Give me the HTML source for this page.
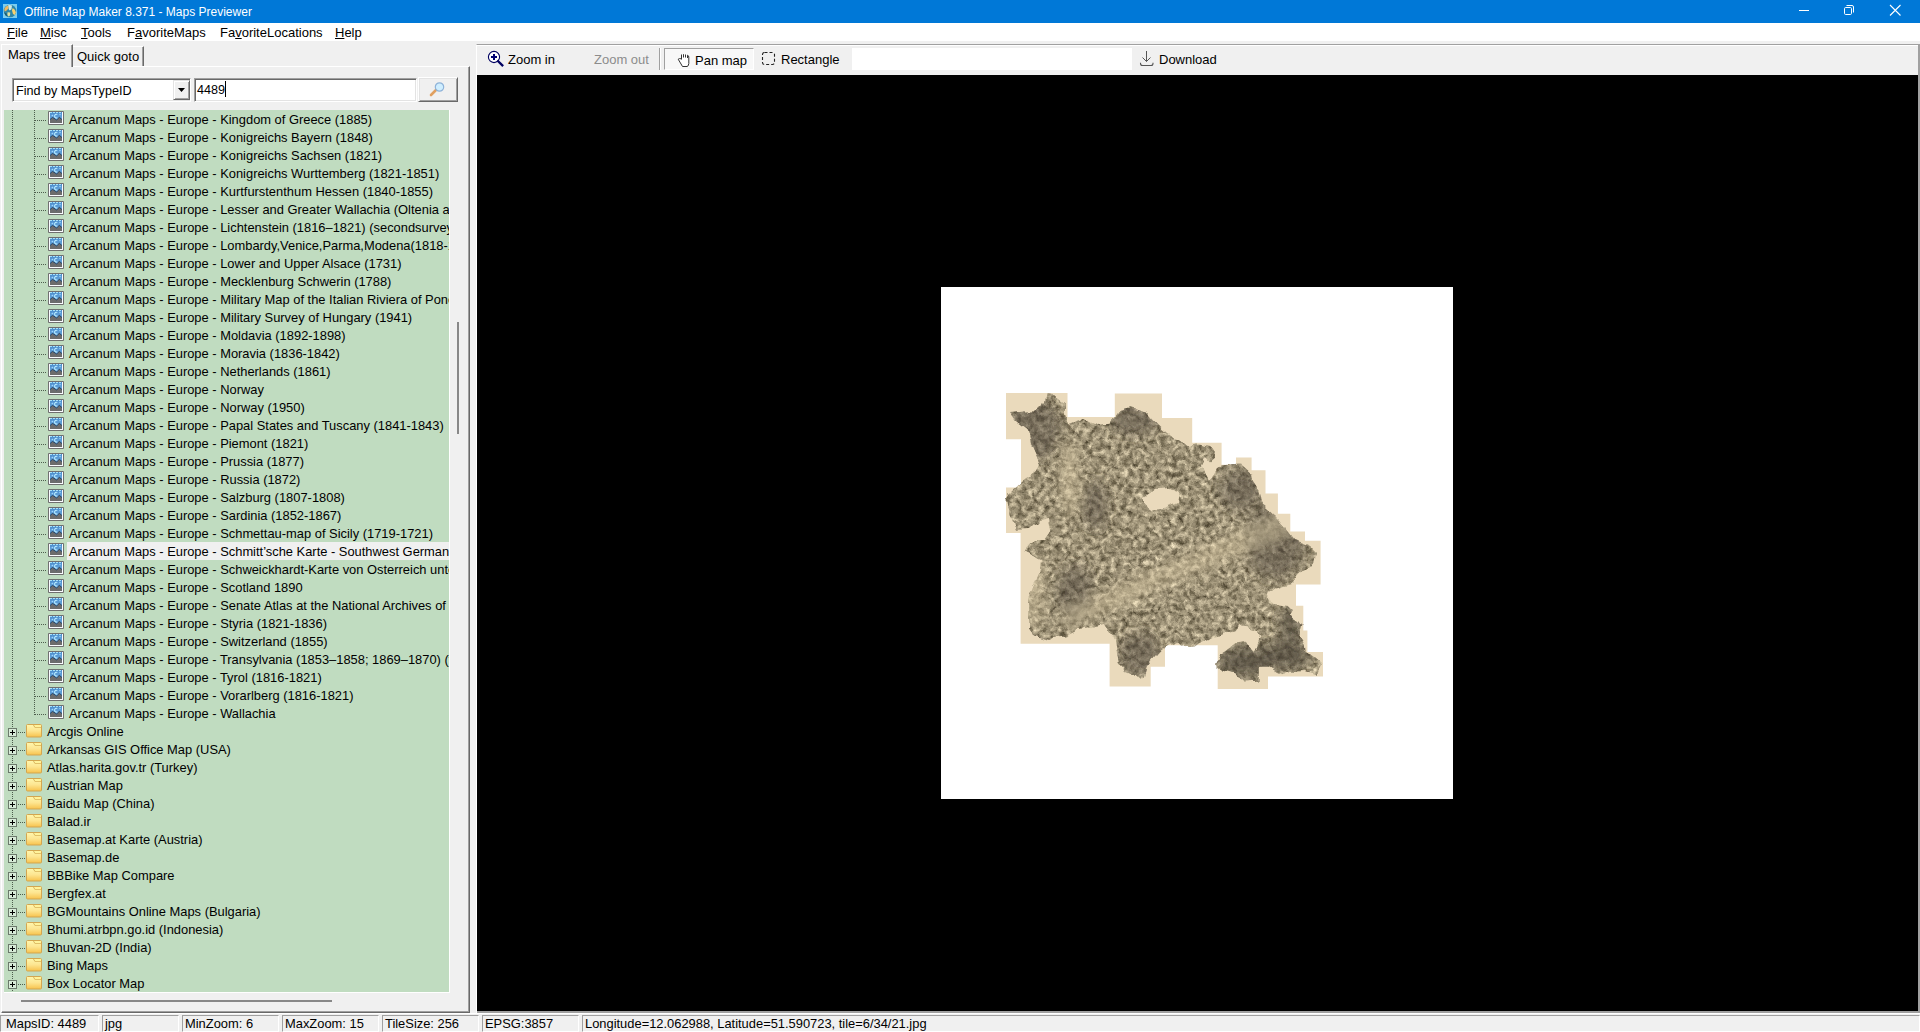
<!DOCTYPE html>
<html><head><meta charset="utf-8"><title>Offline Map Maker</title>
<style>
*{box-sizing:border-box}
html,body{margin:0;padding:0}
body{width:1920px;height:1032px;overflow:hidden;position:relative;background:#f0f0f0;font-family:"Liberation Sans",sans-serif;font-size:13px;color:#000}
.a{position:absolute}
#title{left:0;top:0;width:1920px;height:23px;background:#0078d7;color:#fff}
#title .t{position:absolute;left:24px;top:5px;font-size:12px;line-height:14px;white-space:nowrap}
#menu{left:0;top:23px;width:1920px;height:18px;background:#fff}
.mi{position:absolute;top:2px;line-height:15px;white-space:nowrap}
u{text-decoration:underline;text-decoration-thickness:1px;text-underline-offset:1px}
#tree{left:4px;top:110px;width:445px;height:882px;background:#c0dcc0;overflow:hidden}
#tree .row{position:absolute;height:18px;line-height:18px;padding-top:1px;padding-left:2px;padding-right:4px;white-space:nowrap;font-size:12.9px}
#tree .sel{background:#f0f0f0}
.hd{position:absolute;height:1px;background-image:linear-gradient(90deg,#4d5d4d 50%,transparent 50%);background-size:2px 1px}
.vd{position:absolute;width:1px;background-image:linear-gradient(180deg,#4d5d4d 50%,transparent 50%);background-size:1px 2px}
.ai{position:absolute;left:44px;width:16px;height:16px}
.fo{position:absolute;left:22px;width:16px;height:14px}
.eb{position:absolute;left:4px;width:9px;height:9px;border:1px solid #6c7a6c;background:#d8ecd8}
.eb:before{content:"";position:absolute;left:1px;top:3px;width:5px;height:1px;background:#000}
.eb:after{content:"";position:absolute;left:3px;top:1px;width:1px;height:5px;background:#000}
.sunk{position:absolute;background:#fff;border-top:1px solid #a0a0a0;border-left:1px solid #a0a0a0;border-right:1px solid #fff;border-bottom:1px solid #fff;box-shadow:inset 1px 1px 0 #696969, inset -1px -1px 0 #e3e3e3}
.rais{position:absolute;background:#f0f0f0;border-top:1px solid #fff;border-left:1px solid #fff;border-right:1px solid #696969;border-bottom:1px solid #696969;box-shadow:inset 1px 1px 0 #e3e3e3, inset -1px -1px 0 #a0a0a0}
.st{position:absolute;top:1015px;height:17px;border-top:1px solid #a0a0a0;border-left:1px solid #a0a0a0;border-right:1px solid #fff;border-bottom:1px solid #fff;line-height:15px;padding-left:5px;white-space:nowrap;font-size:12.9px}
</style></head><body>
<svg width="0" height="0" style="position:absolute">
<defs>
<symbol id="imgi" viewBox="0 0 16 16"><defs><linearGradient id="sky" x1="0" y1="0" x2="0" y2="1"><stop offset="0" stop-color="#4a8ccc"/><stop offset="1" stop-color="#78b6e6"/></linearGradient></defs><rect x="0" y="0" width="16" height="14" rx="1" fill="#707070"/><rect x="1" y="1" width="14" height="12" fill="#fafcff"/><rect x="2" y="1" width="12" height="11" fill="url(#sky)"/><path d="M2 1.5 h2 M5 1.5 h2 M8 1.5 h2 M11 1.5 h2" stroke="#a8e2f8" stroke-width="1"/><path d="M2 8.5 L4.5 6.4 L8.7 8.9 L11.3 6.3 L14 8.5 L14 12 L2 12Z" fill="#6c6c6c"/><path d="M2 8.5 L4.5 6.4 L8.7 8.9 L11.3 6.3 L14 8.5" fill="none" stroke="#1d3d60" stroke-width="0.9"/><path d="M9.3 3.4 A1.9 1.9 0 1 0 9.3 6.8" fill="none" stroke="#b8ecff" stroke-width="1.1"/><path d="M4.4 3.4 L5.4 4.4 L4.4 5.4 L3.4 4.4Z" fill="#9fd8ff"/><path d="M12 2.6 L12.9 3.5 L12 4.4 L11.1 3.5Z" fill="#9fd8ff"/></symbol>
<symbol id="fold" viewBox="0 0 16 14"><defs><linearGradient id="fg" x1="0" y1="0" x2="0" y2="1"><stop offset="0" stop-color="#fff7ae"/><stop offset="0.5" stop-color="#fde590"/><stop offset="1" stop-color="#f7c24c"/></linearGradient></defs><path d="M1.5 0.5 H14.5 a1 1 0 0 1 1 1 V12 a1 1 0 0 1 -1 1 H1.5 a1 1 0 0 1 -1 -1 V1.5 a1 1 0 0 1 1 -1Z" fill="url(#fg)" stroke="#d3a650"/><path d="M7.5 1 L8.8 3.3 H15" fill="none" stroke="#d9b45a" stroke-width="1"/><rect x="9" y="1" width="6" height="2" fill="#fff39a"/></symbol>
</defs></svg>

<div id="title" class="a">
 <svg class="a" style="left:3px;top:4px" width="14" height="14" viewBox="0 0 14 14"><rect width="14" height="14" fill="#7ccdf0"/><circle cx="7" cy="7" r="6.3" fill="#2f86a8"/><path d="M5 1.2 Q7 0.6 9 1.4 L8.6 5 Q7 7 6 6 Z" fill="#cfe9e6"/><path d="M1.3 5 Q2.2 2.4 4.8 1.6 L5.6 4.2 L3.6 6.6 L1.6 7.4Z" fill="#f0b860"/><path d="M9.4 4.2 Q12.4 5 12.8 8.4 L11.8 11 L10 10 L9 6.4Z" fill="#f6d070"/><path d="M4.6 8.2 L7.2 8.6 L7 11.6 L5.4 12.4 L4.4 10.6Z" fill="#e2e0a0"/><path d="M1.2 8.5 Q2 11.6 4.2 12.6 L3.6 9.6Z" fill="#1d5a6a"/></svg>
 <div class="t">Offline Map Maker 8.371 - Maps Previewer</div>
 <svg class="a" style="left:1799px;top:10px" width="12" height="2"><rect width="10" height="1" fill="#fff"/></svg>
 <svg class="a" style="left:1843px;top:4px" width="12" height="12" viewBox="0 0 12 12"><rect x="1.5" y="3.5" width="7" height="7" rx="1.2" fill="none" stroke="#fff"/><path d="M3.5 1.5 H9 a1.5 1.5 0 0 1 1.5 1.5 V8.5" fill="none" stroke="#fff"/></svg>
 <svg class="a" style="left:1889px;top:4px" width="13" height="13" viewBox="0 0 13 13"><path d="M1 1 L11.5 11.5 M11.5 1 L1 11.5" stroke="#fff" stroke-width="1.1"/></svg>
</div>

<div id="menu" class="a">
 <div class="mi" style="left:7px"><u>F</u>ile</div>
 <div class="mi" style="left:40px"><u>M</u>isc</div>
 <div class="mi" style="left:81px"><u>T</u>ools</div>
 <div class="mi" style="left:127px">F<u>a</u>voriteMaps</div>
 <div class="mi" style="left:220px">Fa<u>v</u>oriteLocations</div>
 <div class="mi" style="left:335px"><u>H</u>elp</div>
</div>

<!-- left panel -->
<div class="a" style="left:1px;top:66px;width:469px;height:947px;border-top:1px solid #fff;border-left:1px solid #fff;border-right:1px solid #696969;border-bottom:1px solid #696969;box-shadow:inset -1px -1px 0 #a0a0a0"></div>
<div class="a" style="left:1px;top:44px;width:72px;height:23px;background:#f0f0f0;border-top:1px solid #fff;border-left:1px solid #fff;border-right:1px solid #696969;box-shadow:inset -1px 0 0 #a0a0a0"></div>
<div class="a" style="left:8px;top:47px;line-height:16px">Maps tree</div>
<div class="a" style="left:73px;top:46px;width:71px;height:20px;border-top:1px solid #fff;border-right:1px solid #696969;box-shadow:inset -1px 0 0 #a0a0a0"></div>
<div class="a" style="left:77px;top:49px;line-height:16px">Quick goto</div>

<div class="sunk" style="left:12px;top:78px;width:179px;height:24px"></div>
<div class="a" style="left:16px;top:83px;line-height:16px;font-size:12.6px">Find by MapsTypeID</div>
<div class="rais" style="left:173px;top:80px;width:17px;height:20px;border-top-color:#e3e3e3;border-left-color:#e3e3e3;box-shadow:inset 1px 1px 0 #fff, inset -1px -1px 0 #a0a0a0"></div>
<svg class="a" style="left:178px;top:88px" width="7" height="4"><path d="M0 0 H7 L3.5 4Z" fill="#000"/></svg>
<div class="sunk" style="left:194px;top:78px;width:223px;height:24px"></div>
<div class="a" style="left:197px;top:82px;line-height:16px;font-size:12.6px">4489</div>
<div class="a" style="left:225px;top:81px;width:1px;height:16px;background:#000"></div>
<div class="rais" style="left:418px;top:77px;width:40px;height:25px"></div>
<svg class="a" style="left:429px;top:81px" width="18" height="16" viewBox="0 0 18 16"><path d="M2 14 L7 9" stroke="#e0a060" stroke-width="2.6" stroke-linecap="round"/><circle cx="10.5" cy="6" r="4.2" fill="#cfeeff" stroke="#8fb3d9" stroke-width="1.2"/></svg>

<div class="a" style="left:4px;top:110px;width:446px;height:883px;background:#fff"></div>
<div id="tree" class="a">
 <div class="vd" style="left:8px;top:0;height:882px"></div>
 <div class="vd" style="left:30px;top:0;height:605px"></div>
 <div class="hd" style="top:10px;left:31px;width:12px"></div><div class="ai" style="top:1px"><svg width="16" height="16"><use href="#imgi"/></svg></div><div class="row" style="top:0px;left:63px">Arcanum Maps - Europe - Kingdom of Greece (1885)</div>
<div class="hd" style="top:28px;left:31px;width:12px"></div><div class="ai" style="top:19px"><svg width="16" height="16"><use href="#imgi"/></svg></div><div class="row" style="top:18px;left:63px">Arcanum Maps - Europe - Konigreichs Bayern (1848)</div>
<div class="hd" style="top:46px;left:31px;width:12px"></div><div class="ai" style="top:37px"><svg width="16" height="16"><use href="#imgi"/></svg></div><div class="row" style="top:36px;left:63px">Arcanum Maps - Europe - Konigreichs Sachsen (1821)</div>
<div class="hd" style="top:64px;left:31px;width:12px"></div><div class="ai" style="top:55px"><svg width="16" height="16"><use href="#imgi"/></svg></div><div class="row" style="top:54px;left:63px">Arcanum Maps - Europe - Konigreichs Wurttemberg (1821-1851)</div>
<div class="hd" style="top:82px;left:31px;width:12px"></div><div class="ai" style="top:73px"><svg width="16" height="16"><use href="#imgi"/></svg></div><div class="row" style="top:72px;left:63px">Arcanum Maps - Europe - Kurtfurstenthum Hessen (1840-1855)</div>
<div class="hd" style="top:100px;left:31px;width:12px"></div><div class="ai" style="top:91px"><svg width="16" height="16"><use href="#imgi"/></svg></div><div class="row" style="top:90px;left:63px">Arcanum Maps - Europe - Lesser and Greater Wallachia (Oltenia and Muntenia)</div>
<div class="hd" style="top:118px;left:31px;width:12px"></div><div class="ai" style="top:109px"><svg width="16" height="16"><use href="#imgi"/></svg></div><div class="row" style="top:108px;left:63px">Arcanum Maps - Europe - Lichtenstein (1816–1821) (secondsurvey)</div>
<div class="hd" style="top:136px;left:31px;width:12px"></div><div class="ai" style="top:127px"><svg width="16" height="16"><use href="#imgi"/></svg></div><div class="row" style="top:126px;left:63px">Arcanum Maps - Europe - Lombardy,Venice,Parma,Modena(1818-1829)</div>
<div class="hd" style="top:154px;left:31px;width:12px"></div><div class="ai" style="top:145px"><svg width="16" height="16"><use href="#imgi"/></svg></div><div class="row" style="top:144px;left:63px">Arcanum Maps - Europe - Lower and Upper Alsace (1731)</div>
<div class="hd" style="top:172px;left:31px;width:12px"></div><div class="ai" style="top:163px"><svg width="16" height="16"><use href="#imgi"/></svg></div><div class="row" style="top:162px;left:63px">Arcanum Maps - Europe - Mecklenburg Schwerin (1788)</div>
<div class="hd" style="top:190px;left:31px;width:12px"></div><div class="ai" style="top:181px"><svg width="16" height="16"><use href="#imgi"/></svg></div><div class="row" style="top:180px;left:63px">Arcanum Maps - Europe - Military Map of the Italian Riviera of Ponente</div>
<div class="hd" style="top:208px;left:31px;width:12px"></div><div class="ai" style="top:199px"><svg width="16" height="16"><use href="#imgi"/></svg></div><div class="row" style="top:198px;left:63px">Arcanum Maps - Europe - Military Survey of Hungary (1941)</div>
<div class="hd" style="top:226px;left:31px;width:12px"></div><div class="ai" style="top:217px"><svg width="16" height="16"><use href="#imgi"/></svg></div><div class="row" style="top:216px;left:63px">Arcanum Maps - Europe - Moldavia (1892-1898)</div>
<div class="hd" style="top:244px;left:31px;width:12px"></div><div class="ai" style="top:235px"><svg width="16" height="16"><use href="#imgi"/></svg></div><div class="row" style="top:234px;left:63px">Arcanum Maps - Europe - Moravia (1836-1842)</div>
<div class="hd" style="top:262px;left:31px;width:12px"></div><div class="ai" style="top:253px"><svg width="16" height="16"><use href="#imgi"/></svg></div><div class="row" style="top:252px;left:63px">Arcanum Maps - Europe - Netherlands (1861)</div>
<div class="hd" style="top:280px;left:31px;width:12px"></div><div class="ai" style="top:271px"><svg width="16" height="16"><use href="#imgi"/></svg></div><div class="row" style="top:270px;left:63px">Arcanum Maps - Europe - Norway</div>
<div class="hd" style="top:298px;left:31px;width:12px"></div><div class="ai" style="top:289px"><svg width="16" height="16"><use href="#imgi"/></svg></div><div class="row" style="top:288px;left:63px">Arcanum Maps - Europe - Norway (1950)</div>
<div class="hd" style="top:316px;left:31px;width:12px"></div><div class="ai" style="top:307px"><svg width="16" height="16"><use href="#imgi"/></svg></div><div class="row" style="top:306px;left:63px">Arcanum Maps - Europe - Papal States and Tuscany (1841-1843)</div>
<div class="hd" style="top:334px;left:31px;width:12px"></div><div class="ai" style="top:325px"><svg width="16" height="16"><use href="#imgi"/></svg></div><div class="row" style="top:324px;left:63px">Arcanum Maps - Europe - Piemont (1821)</div>
<div class="hd" style="top:352px;left:31px;width:12px"></div><div class="ai" style="top:343px"><svg width="16" height="16"><use href="#imgi"/></svg></div><div class="row" style="top:342px;left:63px">Arcanum Maps - Europe - Prussia (1877)</div>
<div class="hd" style="top:370px;left:31px;width:12px"></div><div class="ai" style="top:361px"><svg width="16" height="16"><use href="#imgi"/></svg></div><div class="row" style="top:360px;left:63px">Arcanum Maps - Europe - Russia (1872)</div>
<div class="hd" style="top:388px;left:31px;width:12px"></div><div class="ai" style="top:379px"><svg width="16" height="16"><use href="#imgi"/></svg></div><div class="row" style="top:378px;left:63px">Arcanum Maps - Europe - Salzburg (1807-1808)</div>
<div class="hd" style="top:406px;left:31px;width:12px"></div><div class="ai" style="top:397px"><svg width="16" height="16"><use href="#imgi"/></svg></div><div class="row" style="top:396px;left:63px">Arcanum Maps - Europe - Sardinia (1852-1867)</div>
<div class="hd" style="top:424px;left:31px;width:12px"></div><div class="ai" style="top:415px"><svg width="16" height="16"><use href="#imgi"/></svg></div><div class="row" style="top:414px;left:63px">Arcanum Maps - Europe - Schmettau-map of Sicily (1719-1721)</div>
<div class="hd" style="top:442px;left:31px;width:12px"></div><div class="ai" style="top:433px"><svg width="16" height="16"><use href="#imgi"/></svg></div><div class="row sel" style="top:432px;left:63px">Arcanum Maps - Europe - Schmitt’sche Karte - Southwest Germany (1797)</div>
<div class="hd" style="top:460px;left:31px;width:12px"></div><div class="ai" style="top:451px"><svg width="16" height="16"><use href="#imgi"/></svg></div><div class="row" style="top:450px;left:63px">Arcanum Maps - Europe - Schweickhardt-Karte von Osterreich unter der Enns</div>
<div class="hd" style="top:478px;left:31px;width:12px"></div><div class="ai" style="top:469px"><svg width="16" height="16"><use href="#imgi"/></svg></div><div class="row" style="top:468px;left:63px">Arcanum Maps - Europe - Scotland 1890</div>
<div class="hd" style="top:496px;left:31px;width:12px"></div><div class="ai" style="top:487px"><svg width="16" height="16"><use href="#imgi"/></svg></div><div class="row" style="top:486px;left:63px">Arcanum Maps - Europe - Senate Atlas at the National Archives of Finland</div>
<div class="hd" style="top:514px;left:31px;width:12px"></div><div class="ai" style="top:505px"><svg width="16" height="16"><use href="#imgi"/></svg></div><div class="row" style="top:504px;left:63px">Arcanum Maps - Europe - Styria (1821-1836)</div>
<div class="hd" style="top:532px;left:31px;width:12px"></div><div class="ai" style="top:523px"><svg width="16" height="16"><use href="#imgi"/></svg></div><div class="row" style="top:522px;left:63px">Arcanum Maps - Europe - Switzerland (1855)</div>
<div class="hd" style="top:550px;left:31px;width:12px"></div><div class="ai" style="top:541px"><svg width="16" height="16"><use href="#imgi"/></svg></div><div class="row" style="top:540px;left:63px">Arcanum Maps - Europe - Transylvania (1853–1858; 1869–1870) (third survey)</div>
<div class="hd" style="top:568px;left:31px;width:12px"></div><div class="ai" style="top:559px"><svg width="16" height="16"><use href="#imgi"/></svg></div><div class="row" style="top:558px;left:63px">Arcanum Maps - Europe - Tyrol (1816-1821)</div>
<div class="hd" style="top:586px;left:31px;width:12px"></div><div class="ai" style="top:577px"><svg width="16" height="16"><use href="#imgi"/></svg></div><div class="row" style="top:576px;left:63px">Arcanum Maps - Europe - Vorarlberg (1816-1821)</div>
<div class="hd" style="top:604px;left:31px;width:12px"></div><div class="ai" style="top:595px"><svg width="16" height="16"><use href="#imgi"/></svg></div><div class="row" style="top:594px;left:63px">Arcanum Maps - Europe - Wallachia</div>
<div class="hd" style="top:622px;left:14px;width:8px"></div><div class="eb" style="top:618px"></div><div class="fo" style="top:614px"><svg width="16" height="14"><use href="#fold"/></svg></div><div class="row" style="top:612px;left:41px">Arcgis Online</div>
<div class="hd" style="top:640px;left:14px;width:8px"></div><div class="eb" style="top:636px"></div><div class="fo" style="top:632px"><svg width="16" height="14"><use href="#fold"/></svg></div><div class="row" style="top:630px;left:41px">Arkansas GIS Office Map (USA)</div>
<div class="hd" style="top:658px;left:14px;width:8px"></div><div class="eb" style="top:654px"></div><div class="fo" style="top:650px"><svg width="16" height="14"><use href="#fold"/></svg></div><div class="row" style="top:648px;left:41px">Atlas.harita.gov.tr (Turkey)</div>
<div class="hd" style="top:676px;left:14px;width:8px"></div><div class="eb" style="top:672px"></div><div class="fo" style="top:668px"><svg width="16" height="14"><use href="#fold"/></svg></div><div class="row" style="top:666px;left:41px">Austrian Map</div>
<div class="hd" style="top:694px;left:14px;width:8px"></div><div class="eb" style="top:690px"></div><div class="fo" style="top:686px"><svg width="16" height="14"><use href="#fold"/></svg></div><div class="row" style="top:684px;left:41px">Baidu Map (China)</div>
<div class="hd" style="top:712px;left:14px;width:8px"></div><div class="eb" style="top:708px"></div><div class="fo" style="top:704px"><svg width="16" height="14"><use href="#fold"/></svg></div><div class="row" style="top:702px;left:41px">Balad.ir</div>
<div class="hd" style="top:730px;left:14px;width:8px"></div><div class="eb" style="top:726px"></div><div class="fo" style="top:722px"><svg width="16" height="14"><use href="#fold"/></svg></div><div class="row" style="top:720px;left:41px">Basemap.at Karte (Austria)</div>
<div class="hd" style="top:748px;left:14px;width:8px"></div><div class="eb" style="top:744px"></div><div class="fo" style="top:740px"><svg width="16" height="14"><use href="#fold"/></svg></div><div class="row" style="top:738px;left:41px">Basemap.de</div>
<div class="hd" style="top:766px;left:14px;width:8px"></div><div class="eb" style="top:762px"></div><div class="fo" style="top:758px"><svg width="16" height="14"><use href="#fold"/></svg></div><div class="row" style="top:756px;left:41px">BBBike Map Compare</div>
<div class="hd" style="top:784px;left:14px;width:8px"></div><div class="eb" style="top:780px"></div><div class="fo" style="top:776px"><svg width="16" height="14"><use href="#fold"/></svg></div><div class="row" style="top:774px;left:41px">Bergfex.at</div>
<div class="hd" style="top:802px;left:14px;width:8px"></div><div class="eb" style="top:798px"></div><div class="fo" style="top:794px"><svg width="16" height="14"><use href="#fold"/></svg></div><div class="row" style="top:792px;left:41px">BGMountains Online Maps (Bulgaria)</div>
<div class="hd" style="top:820px;left:14px;width:8px"></div><div class="eb" style="top:816px"></div><div class="fo" style="top:812px"><svg width="16" height="14"><use href="#fold"/></svg></div><div class="row" style="top:810px;left:41px">Bhumi.atrbpn.go.id (Indonesia)</div>
<div class="hd" style="top:838px;left:14px;width:8px"></div><div class="eb" style="top:834px"></div><div class="fo" style="top:830px"><svg width="16" height="14"><use href="#fold"/></svg></div><div class="row" style="top:828px;left:41px">Bhuvan-2D (India)</div>
<div class="hd" style="top:856px;left:14px;width:8px"></div><div class="eb" style="top:852px"></div><div class="fo" style="top:848px"><svg width="16" height="14"><use href="#fold"/></svg></div><div class="row" style="top:846px;left:41px">Bing Maps</div>
<div class="hd" style="top:874px;left:14px;width:8px"></div><div class="eb" style="top:870px"></div><div class="fo" style="top:866px"><svg width="16" height="14"><use href="#fold"/></svg></div><div class="row" style="top:864px;left:41px">Box Locator Map</div>
</div>
<div class="a" style="left:457px;top:322px;width:2px;height:112px;background:#888"></div>
<div class="a" style="left:21px;top:1000px;width:311px;height:2px;background:#888"></div>

<!-- right side -->
<div class="a" style="left:476px;top:44px;width:1444px;height:969px;border-top:1px solid #a0a0a0;border-left:1px solid #fff;box-shadow:inset 0 1px 0 #fff"></div>
<div class="a" style="left:477px;top:75px;width:1441px;height:936px;background:#000"></div>
<div class="a" style="left:477px;top:1011px;width:1443px;height:2px;background:#a0a0a0"></div>
<div class="a" style="left:1918px;top:45px;width:2px;height:968px;background:#a0a0a0"></div>

<!-- toolbar -->
<svg class="a" style="left:487px;top:50px" width="17" height="17" viewBox="0 0 17 17"><circle cx="7" cy="7" r="5.6" fill="#fff" stroke="#000060" stroke-width="1.1"/><path d="M4 6 H10 V8 H4Z M6 4 H8 V10 H6Z" fill="#000070"/><path d="M11.2 11.2 L15.3 15.3" stroke="#000060" stroke-width="2.3" stroke-linecap="square"/></svg>
<div class="a" style="left:508px;top:52px;line-height:16px">Zoom in</div>
<div class="a" style="left:594px;top:52px;line-height:16px;color:#8c8c8c">Zoom out</div>
<div class="a" style="left:659px;top:48px;width:1px;height:22px;background:#a0a0a0"></div>
<div class="a" style="left:660px;top:48px;width:1px;height:22px;background:#fff"></div>
<div class="a" style="left:664px;top:48px;width:90px;height:22px;background:#f8f8f8;border-top:1px solid #a0a0a0;border-left:1px solid #a0a0a0;border-right:1px solid #fff;border-bottom:1px solid #fff"></div>
<svg class="a" style="left:677px;top:53px" width="14" height="15" viewBox="0 0 14 15"><path d="M4.4 5.8 V1.5 H11.8 V10.5 Q11.5 13.5 10 13.5 H5.5 L1.2 6.2 Q1.8 5.2 4.4 5.8Z" fill="#fff"/><path d="M4.5 6.5 V1.5 M6.5 4.5 V1.2 M8.5 4.5 V1.5 M10.5 5 V2.2 Q11.8 2.6 11.8 4 V10.5 Q11.5 13.5 10 13.5 H5.5 L1.2 6.2 Q1.8 5.2 4.4 5.8" fill="none" stroke="#333" stroke-width="1"/></svg>
<div class="a" style="left:695px;top:53px;line-height:16px">Pan map</div>
<svg class="a" style="left:761px;top:51px" width="16" height="16" viewBox="0 0 16 16"><rect x="1.5" y="1.5" width="12" height="12" rx="2" fill="none" stroke="#222" stroke-width="1.1" stroke-dasharray="3 2"/></svg>
<div class="a" style="left:781px;top:52px;line-height:16px">Rectangle</div>
<div class="a" style="left:852px;top:48px;width:280px;height:22px;background:#fff"></div>
<svg class="a" style="left:1139px;top:50px" width="16" height="17" viewBox="0 0 16 17"><path d="M7.5 1 V11.5 M3.5 7.5 L7.5 11.5 L11.5 7.5" fill="none" stroke="#555" stroke-width="1"/><path d="M1.5 12.8 V13.5 a2 2 0 0 0 2 2 H12 a2 2 0 0 0 2 -2 V12.8" fill="none" stroke="#555" stroke-width="1.1"/></svg>
<div class="a" style="left:1159px;top:52px;line-height:16px">Download</div>

<!-- map -->
<div class="a" style="left:941px;top:287px;width:512px;height:512px;background:#fff"></div>
<svg class="a" style="left:941px;top:287px" width="512" height="512" viewBox="941 287 512 512">
<defs>
<clipPath id="bc"><path d="M1010 413 L1024.8 411.4 L1035.7 411.4 L1045 402 L1046.5 394.3 L1054 395 L1065 403.6 L1065 413 L1068 424 L1082 419 L1096 425 L1108.6 423.8 L1118 411.4 L1131.8 408.3 L1147 413 L1157 423.8 L1170 436 L1181 440.8 L1188.8 447 L1196.5 444 L1210.5 447 L1216.7 458 L1212 462.5 L1205.8 456 L1201 465.6 L1209 481 L1218 471.8 L1221.3 465.6 L1240 463.3 L1252 474 L1253 482 L1258.5 490.4 L1262.4 506 L1275.6 517.6 L1285.7 529 L1294 540 L1308 545 L1315 553 L1313 566 L1303 569.5 L1296.7 576 L1292 584 L1275 589 L1270.5 592 L1268 598.5 L1273.7 603.9 L1288.6 606 L1292.9 610 L1289.7 615.6 L1298 621 L1301.4 626 L1299.3 635.8 L1304.6 644.4 L1305.6 650.8 L1314 657 L1321.6 663.6 L1316.3 674.2 L1306.7 671 L1288.6 672 L1280 674.2 L1267.3 666.8 L1258.7 666.8 L1258.7 679.6 L1242.8 680.6 L1236.4 674.2 L1224.6 671 L1216 664.6 L1220.4 654 L1226.8 649.7 L1235.3 643.3 L1243.8 642.2 L1249 646.5 L1253.4 651.8 L1257.7 647.6 L1261 637 L1257.7 630.5 L1248 627.3 L1239.6 626.2 L1235.3 631.6 L1224.6 633.7 L1214 637 L1199 643.3 L1194.8 646.5 L1182 647.6 L1176.7 642.2 L1169 645.4 L1160.7 649.7 L1152 659.3 L1146.6 666.7 L1143 680 L1136.7 675 L1125 670 L1118.6 662 L1115 642 L1105 624 L1092 627 L1077.4 629 L1066 635.4 L1052.7 637 L1049 640 L1033 635 L1028 629 L1028 599 L1033 588 L1039.5 571 L1041 560 L1023 551 L1033 540 L1045 540 L1052 530 L1050 518 L1040 520 L1030 530 L1017 530.8 L1009.3 513.7 L1005.4 499.8 L1009.3 493.6 L1023 481 L1035.7 472 L1040 464 L1031 444 L1028 430 L1015.5 420.7Z"/></clipPath>
<filter id="nz" x="941" y="287" width="512" height="512" filterUnits="userSpaceOnUse" color-interpolation-filters="sRGB"><feTurbulence type="fractalNoise" baseFrequency="0.18" numOctaves="4" seed="7"/><feColorMatrix values="0.85 0 0 0 0.19  0.82 0 0 0 0.16  0.75 0 0 0 0.09  0 0 0 0 1"/></filter>
<filter id="dm" x="941" y="287" width="512" height="512" filterUnits="userSpaceOnUse"><feTurbulence type="fractalNoise" baseFrequency="0.09" numOctaves="2" seed="3" result="t"/><feDisplacementMap in="SourceGraphic" in2="t" scale="7" xChannelSelector="R" yChannelSelector="G"/></filter>
<filter id="bl" x="-50%" y="-50%" width="200%" height="200%"><feGaussianBlur stdDeviation="6"/></filter>
</defs>
<rect x="941" y="287" width="512" height="512" fill="#fff"/>
<path d="M1006 393 L1067.5 393 L1067.5 417 L1114.8 417 L1114.8 393.5 L1162 393.5 L1162 418 L1192.2 418 L1192.2 442.7 L1221.6 442.7 L1221.6 464.8 L1236 464.8 L1236 457.6 L1251.6 457.6 L1251.6 470.3 L1265.5 470.3 L1265.5 493.5 L1277.9 493.5 L1277.9 513.7 L1290.3 513.7 L1290.3 531.5 L1305 531.5 L1305 540.7 L1320.6 540.7 L1320.6 584.4 L1296 584.4 L1296 605.8 L1303.3 605.8 L1303.3 630.5 L1307.4 630.5 L1307.4 652 L1323 652 L1323 676.6 L1268 676.6 L1268 689 L1217.7 689 L1217.7 645.3 L1165 645.3 L1165 666.7 L1150.7 666.7 L1150.7 686.5 L1109.6 686.5 L1109.6 643.7 L1020.6 643.7 L1020.6 533 L1006 533 L1006 487.4 L1021 487.4 L1021 439.3 L1006 439.3Z" fill="#eadabc"/>
<g filter="url(#dm)"><g clip-path="url(#bc)">
<rect x="1000" y="390" width="330" height="300" fill="#9b917b" filter="url(#nz)"/>
<g filter="url(#bl)">
<g fill="#4f493c" opacity="0.5">
<ellipse cx="1035" cy="430" rx="25" ry="30"/>
<ellipse cx="1135" cy="420" rx="25" ry="15"/>
<ellipse cx="1275" cy="540" rx="30" ry="38"/>
<ellipse cx="1140" cy="655" rx="20" ry="22"/>
<ellipse cx="1075" cy="595" rx="18" ry="30"/>
<ellipse cx="1095" cy="505" rx="12" ry="25"/>
<ellipse cx="1240" cy="490" rx="20" ry="20"/>
</g>
<g fill="#4a4538" opacity="0.7">
<ellipse cx="1245" cy="662" rx="28" ry="14"/>
<ellipse cx="1285" cy="655" rx="25" ry="14"/>
<ellipse cx="1290" cy="625" rx="10" ry="18"/>
</g>
<g fill="#d9c9a6" opacity="0.5">
<path d="M1060 612 L1285 512 L1292 530 L1070 628Z"/>
<ellipse cx="1035" cy="595" rx="8" ry="35"/>
<ellipse cx="1070" cy="480" rx="8" ry="40"/>
</g>
</g>
</g>
<path d="M1143 497 L1155 489 L1170 488 L1180 492 L1178 503 L1165 509 L1150 510 L1143 504Z" fill="#eadabc"/>
</svg>

<!-- status bar -->
<div class="a" style="left:0;top:1013px;width:1920px;height:1px;background:#fff"></div>
<div class="st" style="left:0;width:99px">MapsID: 4489</div>
<div class="st" style="left:102px;width:77px;padding-left:2px">jpg</div>
<div class="st" style="padding-left:2px;left:182px;width:97px">MinZoom: 6</div>
<div class="st" style="padding-left:2px;left:282px;width:97px">MaxZoom: 15</div>
<div class="st" style="padding-left:2px;left:382px;width:97px">TileSize: 256</div>
<div class="st" style="padding-left:2px;left:482px;width:97px">EPSG:3857</div>
<div class="st" style="padding-left:2px;left:582px;width:1338px">Longitude=12.062988, Latitude=51.590723, tile=6/34/21.jpg</div>
</body></html>
